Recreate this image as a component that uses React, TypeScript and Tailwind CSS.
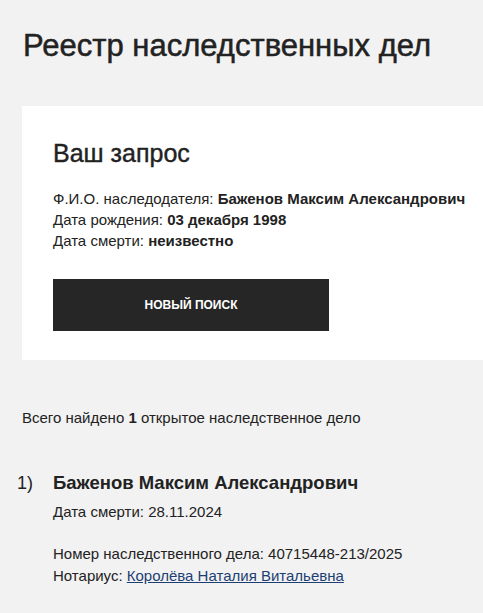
export default function App() {
  return (
    <div className="min-h-[613px] w-[483px] overflow-hidden bg-[#f2f2f2] text-[#222] font-['Liberation_Sans',Arial,sans-serif]">
      <h1 className="pl-[23px] pt-[28px] text-[31px] leading-[36px] font-normal [-webkit-text-stroke:0.5px_#222]">
        Реестр наследственных дел
      </h1>

      {/* Request card */}
      <section className="ml-[22px] mt-[42px] h-[254px] bg-white pl-[31px] pt-[32px]">
        <h2 className="text-[25px] leading-[30px] font-normal [-webkit-text-stroke:0.4px_#222]">Ваш запрос</h2>
        <div className="mt-[20px] text-[15px] leading-[21px]">
          <p>
            Ф.И.О. наследодателя: <b>Баженов Максим Александрович</b>
          </p>
          <p>
            Дата рождения: <b>03 декабря 1998</b>
          </p>
          <p>
            Дата смерти: <b>неизвестно</b>
          </p>
        </div>
        <button
          type="button"
          className="mt-[28px] flex h-[52px] w-[276px] items-center justify-center bg-[#262626] text-[12px] font-bold uppercase text-white"
        >
          Новый поиск
        </button>
      </section>

      <p className="mt-[48px] pl-[22px] text-[15px] leading-[20px]">
        Всего найдено <b>1</b> открытое наследственное дело
      </p>

      <div className="mt-[43px] flex">
        <span className="w-[53px] pl-[17px] text-[18px] leading-[24px]">1)</span>
        <div>
          <div className="text-[18.5px] leading-[24px] font-bold">Баженов Максим Александрович</div>
          <p className="mt-[6px] text-[15px] leading-[21px]">Дата смерти: 28.11.2024</p>
          <div className="mt-[21px] text-[15px] leading-[22px]">
            <p>Номер наследственного дела: 40715448-213/2025</p>
            <p>
              Нотариус:{" "}
              <a href="#" className="text-[#1d3f73] underline">
                Королёва Наталия Витальевна
              </a>
            </p>
          </div>
        </div>
      </div>
    </div>
  );
}
